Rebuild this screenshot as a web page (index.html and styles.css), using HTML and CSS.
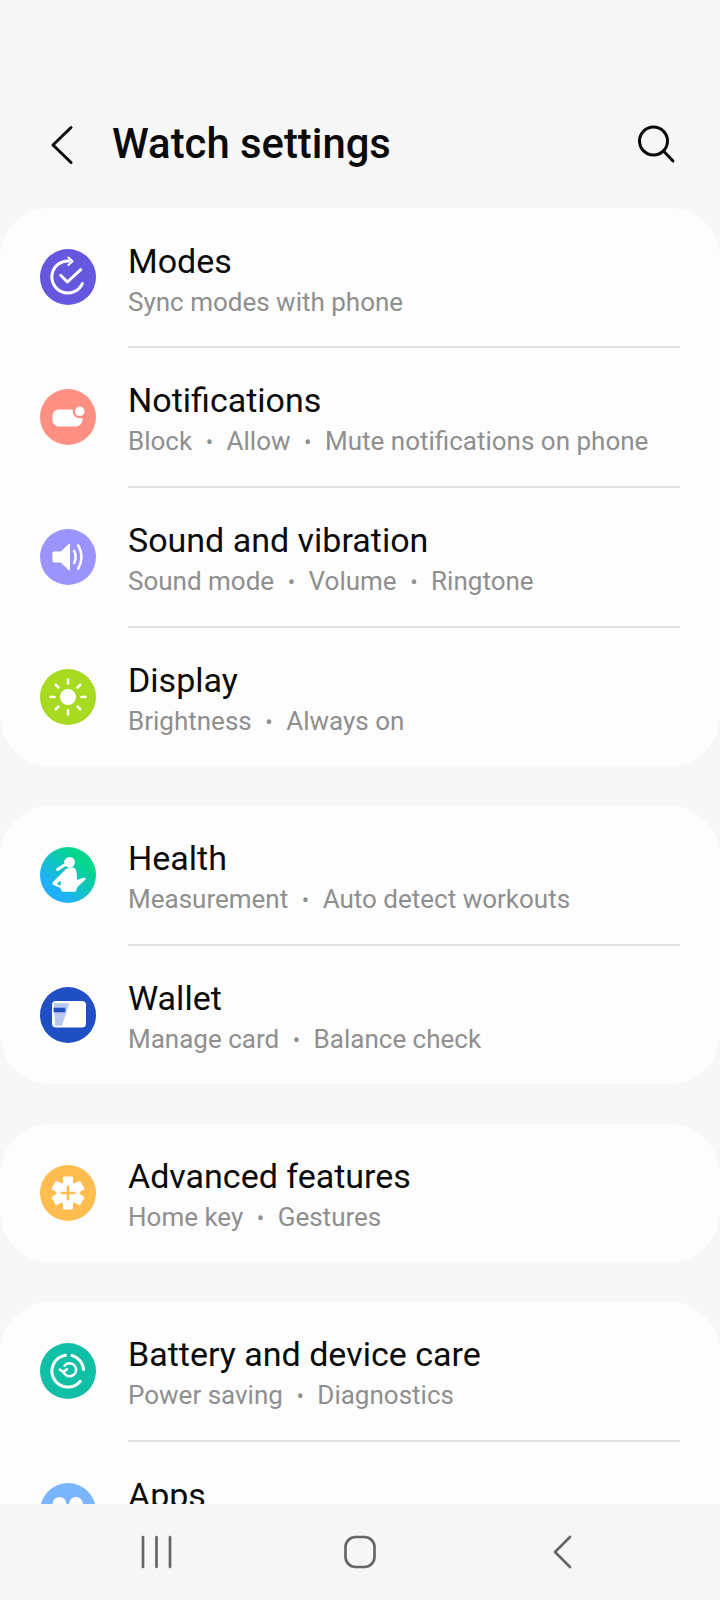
FILE: index.html
```html
<!DOCTYPE html>
<html lang="en">
<head>
<meta charset="utf-8">
<title>Watch settings</title>
<link rel="stylesheet" href="styles.css">
</head>
<body>
<div class="screen">
  <main class="content">
    <header class="appbar">
      <svg class="back" viewBox="0 0 24 40"><path d="M21 2.500 3 20 21 37.500"/></svg>
      <h1 class="title">Watch settings</h1>
      <svg class="search" viewBox="0 0 40 40"><circle cx="17.500" cy="17" r="14"/><path d="M27.500 27 37 37"/></svg>
    </header>

    <section class="card">
      <div class="row">
        <svg class="icon" viewBox="0 0 56 56"><circle class="bg-modes" cx="28" cy="28" r="28"/>
          <path class="ws" d="M29 12A16 16 0 1 0 42.400 34.600"/><path class="ws thin" d="M28.400 8.500 32.600 12.300 28.400 16"/><path class="ws" d="M20.700 26.300 27.400 33 40.700 20.600"/></svg>
        <div class="text"><div class="name">Modes</div><div class="sub">Sync modes with phone</div></div>
      </div>
      <div class="row">
        <svg class="icon" viewBox="0 0 56 56"><circle class="bg-notif" cx="28" cy="28" r="28"/>
          <rect class="wf" x="12.400" y="20.400" width="30" height="17" rx="6.500"/><circle class="bg-notif" cx="39.700" cy="22.300" r="7"/><circle class="wf" cx="39.700" cy="22.300" r="4.800"/></svg>
        <div class="text"><div class="name">Notifications</div><div class="sub">Block<span class="dot">•</span>Allow<span class="dot">•</span>Mute notifications on phone</div></div>
      </div>
      <div class="row">
        <svg class="icon" viewBox="0 0 56 56"><circle class="bg-sound" cx="28" cy="28" r="28"/>
          <path class="wf" d="M14.500 22.500H20.700L28.500 15.200C29.200 14.600 30 15 30 16V40.200C30 41.200 29.200 41.600 28.500 41L20.700 33.500H14.500C13.200 33.500 12.400 32.700 12.400 31.500V24.500C12.400 23.300 13.200 22.500 14.500 22.500Z"/>
          <path class="ws med" d="M34.200 22Q37 28 34.200 34"/><path class="ws med" d="M38.200 16.300Q44.800 28 38.200 39.600"/></svg>
        <div class="text"><div class="name">Sound and vibration</div><div class="sub">Sound mode<span class="dot">•</span>Volume<span class="dot">•</span>Ringtone</div></div>
      </div>
      <div class="row">
        <svg class="icon" viewBox="0 0 56 56"><circle class="bg-display" cx="28" cy="28" r="28"/>
          <circle class="wf" cx="28" cy="28" r="8"/>
          <path class="ws med" d="M28 10.500V14.500M28 41.500V45.500M10.500 28H14.500M41.500 28H45.500M15.700 15.700 18.500 18.500M37.500 37.500 40.300 40.300M15.700 40.300 18.500 37.500M37.500 18.500 40.300 15.700"/></svg>
        <div class="text"><div class="name">Display</div><div class="sub">Brightness<span class="dot">•</span>Always on</div></div>
      </div>
    </section>

    <section class="card">
      <div class="row">
        <svg class="icon" viewBox="0 0 56 56">
          <defs><linearGradient id="healthGrad" x1="0.85" y1="0.15" x2="0.2" y2="0.85"><stop offset="0.15" stop-color="#04d68c"/><stop offset="0.9" stop-color="#1fb0fb"/></linearGradient></defs>
          <circle cx="28" cy="28" r="28" fill="url(#healthGrad)"/>
          <circle class="wf" cx="29.600" cy="15.300" r="5.400"/><path class="ws" d="M25.300 17.500 17.500 22.500"/>
          <path class="wf" d="M24 24C26 20.500 33 19.500 35.500 22 37 25 37 29 37 33L44 30.500C45.500 30.200 46.200 31.800 45.200 32.800L37.500 40 35.500 44.700H22L20.500 41 13.500 38C12.200 37.400 12.200 36.200 13 35Z"/>
          <path class="notch" d="M20.500 33.500 16.800 36.800 20.800 38.800Z"/></svg>
        <div class="text"><div class="name">Health</div><div class="sub">Measurement<span class="dot">•</span>Auto detect workouts</div></div>
      </div>
      <div class="row">
        <svg class="icon" viewBox="0 0 56 56"><circle class="bg-wallet" cx="28" cy="28" r="28"/>
          <rect class="wf" x="12" y="14" width="34" height="26.500" rx="4"/>
          <path class="wallet-light" d="M13.600 16.300H29.300L22 38.700H15.300Z"/><rect class="bg-wallet" x="13.600" y="20.700" width="11.700" height="4.600"/></svg>
        <div class="text"><div class="name">Wallet</div><div class="sub">Manage card<span class="dot">•</span>Balance check</div></div>
      </div>
    </section>

    <section class="card">
      <div class="row">
        <svg class="icon" viewBox="0 0 56 56"><circle class="bg-adv" cx="28" cy="28" r="28"/>
          <circle class="wf" cx="28" cy="28" r="11.500"/>
          <path class="gear" d="M24 12.500H32V20H24ZM24 43.500H32V36H24Z"/>
          <path class="gear" d="M24 12.500H32V20H24ZM24 43.500H32V36H24Z" transform="rotate(60 28 28)"/>
          <path class="gear" d="M24 12.500H32V20H24ZM24 43.500H32V36H24Z" transform="rotate(120 28 28)"/>
          <path class="plus" d="M28 21.700V34.300M21.700 28H34.300"/></svg>
        <div class="text"><div class="name">Advanced features</div><div class="sub">Home key<span class="dot">•</span>Gestures</div></div>
      </div>
    </section>

    <section class="card">
      <div class="row">
        <svg class="icon" viewBox="0 0 56 56"><circle class="bg-batt" cx="28" cy="28" r="28"/>
          <path class="ws" d="M25.500 12.300A16 16 0 1 0 40.300 38.300"/><path class="ws" d="M32 12.500A16 16 0 0 1 43.700 26.500"/>
          <path class="ws med" d="M24.500 22.800A6.500 6.500 0 1 1 23.500 29"/><path class="ws med" d="M19.800 26.600 23.500 29 27 26.200"/></svg>
        <div class="text"><div class="name">Battery and device care</div><div class="sub">Power saving<span class="dot">•</span>Diagnostics</div></div>
      </div>
      <div class="row">
        <svg class="icon" viewBox="0 0 56 56"><circle class="bg-apps" cx="28" cy="28" r="28"/>
          <circle class="wf" cx="19.500" cy="21" r="7"/><circle class="wf" cx="36" cy="21" r="7"/><circle class="wf" cx="19.500" cy="37" r="7"/><circle class="wf" cx="36" cy="37" r="7"/></svg>
        <div class="text"><div class="name">Apps</div><div class="sub">&nbsp;</div></div>
      </div>
    </section>
  </main>

  <nav class="navbar">
    <svg class="nav-recent" viewBox="0 0 32 34"><path d="M2 2V32M15.500 2V32M29 2V32"/></svg>
    <svg class="nav-home" viewBox="0 0 34 34"><rect x="2.500" y="2" width="29" height="30" rx="10"/></svg>
    <svg class="nav-back" viewBox="0 0 20 34"><path d="M17 2 2 17 17 32"/></svg>
  </nav>
</div>
</body>
</html>
```
FILE: styles.css
```css
* { box-sizing: border-box; }
html, body { margin: 0; padding: 0; }
body {
  background: #f7f7f7;
  font-family: Roboto, "Liberation Sans", sans-serif;
  overflow: hidden;
}
.screen {
  width: 720px;
  height: 1600px;
  display: flex;
  flex-direction: column;
  overflow: hidden;
}
.content {
  flex: 1;
  min-height: 0;
  overflow: hidden;
  display: flex;
  flex-direction: column;
  gap: 40px;
}
.appbar {
  flex: none;
  height: 208px;
  margin-bottom: -40px;
  padding-top: 104px;
  display: flex;
  align-items: flex-start;
}
.appbar svg { fill: none; stroke: #0a0a0a; stroke-width: 3; stroke-linecap: round; stroke-linejoin: round; }
.back { width: 24px; height: 40px; margin: 21px 0 0 50px; flex: none; }
.title {
  margin: 0 0 0 38px;
  font-size: 41.800px;
  line-height: 80px;
  font-weight: 500;
  color: #0a0a0a;
  flex: 1;
}
.search { width: 40px; height: 40px; margin: 20px 44px 0 0; flex: none; }

.card {
  flex: none;
  background: #fdfdfd;
  border-radius: 50px;
}
.row {
  position: relative;
  height: 138px;
  display: flex;
  align-items: center;
  padding-left: 40px;
}
.row + .row { margin-top: 2px; }
.row + .row::before {
  content: "";
  position: absolute;
  left: 128px;
  right: 40px;
  top: -2px;
  height: 2px;
  background: #e2e2e2;
}
.icon { width: 56px; height: 56px; flex: none; }
.text { margin-left: 32px; padding-top: 9px; }
.name { font-size: 34px; line-height: 41px; color: #0a0a0a; }
.sub { font-size: 26px; line-height: 41px; color: #8f8f8f; }
.dot { font-size: 22px; margin: 0 13.500px; }

.bg-modes { fill: #6558de; }
.bg-notif { fill: #ff8e83; }
.bg-sound { fill: #9b94fd; }
.bg-display { fill: #a8da21; }
.bg-wallet { fill: #1f4fc2; }
.bg-adv { fill: #ffbc4f; }
.bg-batt { fill: #0fbfa6; }
.bg-apps { fill: #7ab5fd; }
.wf { fill: #fff; }
.ws { fill: none; stroke: #fff; stroke-width: 3; stroke-linecap: round; stroke-linejoin: round; }
.ws.med { stroke-width: 2.500; }
.ws.thin { stroke-width: 2; }
.notch { fill: #10c0c0; }
.wallet-light { fill: #b9c8f2; }
.gear { fill: #fff; stroke: #fff; stroke-width: 2; stroke-linejoin: round; }
.plus { fill: none; stroke: #ffbc4f; stroke-width: 2.500; stroke-linecap: round; }

.navbar {
  flex: none;
  height: 96px;
  background: #f6f6f6;
  padding: 31px 147px 0 141px;
  display: flex;
  justify-content: space-between;
  align-items: flex-start;
}
.navbar svg { fill: none; stroke: #666; stroke-width: 2.700; stroke-linecap: round; stroke-linejoin: round; height: 34px; }
.nav-recent { width: 32px; }
.nav-home { width: 34px; margin-right: 6px; }
.nav-back { width: 20px; }
```
